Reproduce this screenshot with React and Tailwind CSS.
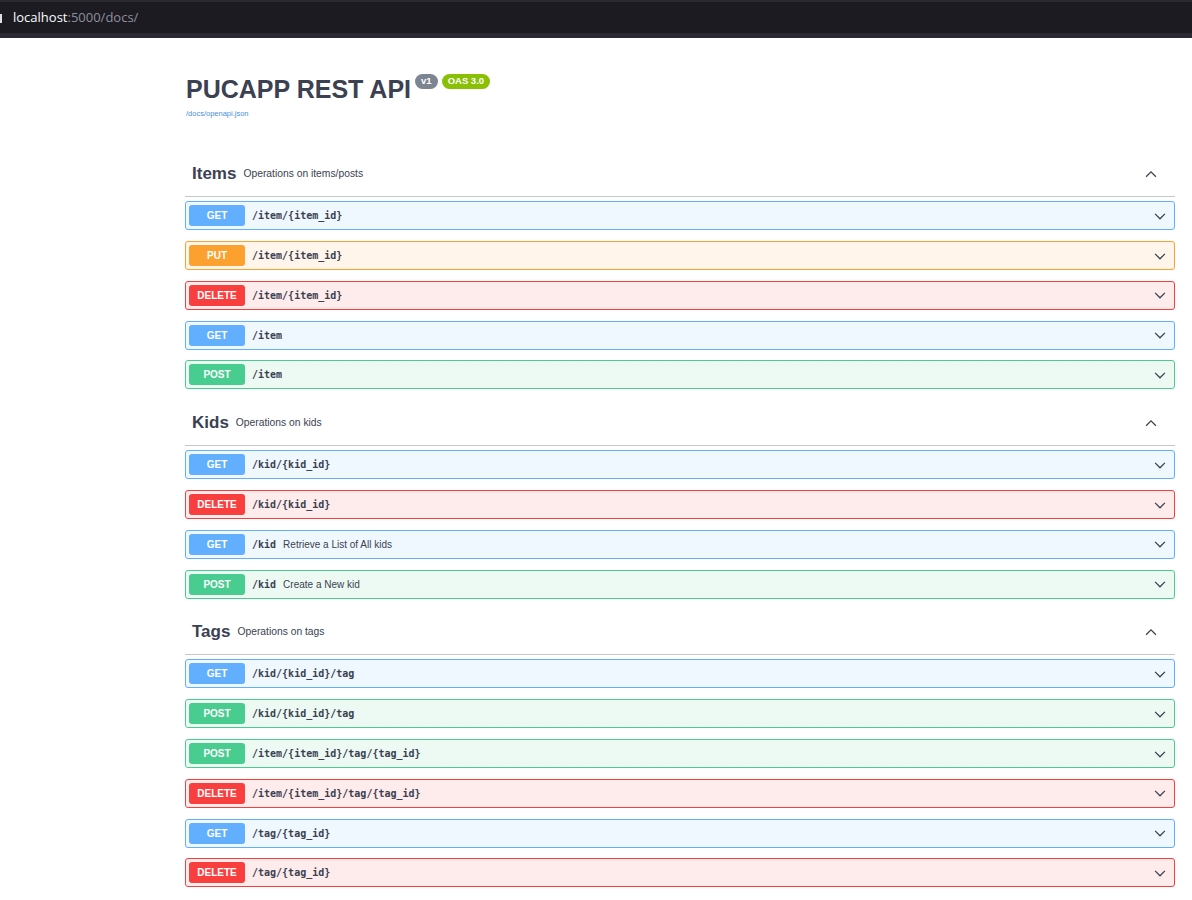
import React from 'react';

const methodStyles = {
  GET: { row: 'border-[#61affe] bg-[#eff7ff]', badge: 'bg-[#61affe]' },
  PUT: { row: 'border-[#fca130] bg-[#fff5ea]', badge: 'bg-[#fca130]' },
  DELETE: { row: 'border-[#f93e3e] bg-[#feebeb]', badge: 'bg-[#f93e3e]' },
  POST: { row: 'border-[#49cc90] bg-[#edfaf3]', badge: 'bg-[#49cc90]' },
};

const sections = [
  {
    name: 'Items',
    desc: 'Operations on items/posts',
    ops: [
      { method: 'GET', path: '/item/{item_id}' },
      { method: 'PUT', path: '/item/{item_id}' },
      { method: 'DELETE', path: '/item/{item_id}' },
      { method: 'GET', path: '/item' },
      { method: 'POST', path: '/item' },
    ],
  },
  {
    name: 'Kids',
    desc: 'Operations on kids',
    ops: [
      { method: 'GET', path: '/kid/{kid_id}' },
      { method: 'DELETE', path: '/kid/{kid_id}' },
      { method: 'GET', path: '/kid', summary: 'Retrieve a List of All kids' },
      { method: 'POST', path: '/kid', summary: 'Create a New kid' },
    ],
  },
  {
    name: 'Tags',
    desc: 'Operations on tags',
    ops: [
      { method: 'GET', path: '/kid/{kid_id}/tag' },
      { method: 'POST', path: '/kid/{kid_id}/tag' },
      { method: 'POST', path: '/item/{item_id}/tag/{tag_id}' },
      { method: 'DELETE', path: '/item/{item_id}/tag/{tag_id}' },
      { method: 'GET', path: '/tag/{tag_id}' },
      { method: 'DELETE', path: '/tag/{tag_id}' },
    ],
  },
];

const Chevron = ({ up }) => (
  <svg width="14" height="14" viewBox="0 0 20 20" className="text-[#3b4151]">
    <path
      d={up ? 'M3 14 L10 7 L17 14' : 'M3 7 L10 14 L17 7'}
      fill="none"
      stroke="currentColor"
      strokeWidth="1.8"
    />
  </svg>
);

const OpRow = ({ op }) => {
  const s = methodStyles[op.method];
  return (
    <div className={`flex items-center h-[29px] mb-[10.8px] border rounded-[3px] pl-[3px] pr-[7px] ${s.row}`}>
      <span className={`w-[56px] h-[21px] rounded-[3px] flex items-center justify-center text-white text-[10px] font-bold ${s.badge}`}>
        {op.method}
      </span>
      <span className="ml-[7px] font-['DejaVu_Sans_Mono',monospace] font-semibold text-[10px] text-[#3b4151]">
        {op.path}
      </span>
      {op.summary && <span className="ml-[7px] text-[10px] text-[#3b4151]">{op.summary}</span>}
      <span className="ml-auto">
        <Chevron />
      </span>
    </div>
  );
};

export default function App() {
  return (
    <div className="min-h-[900px] bg-white font-['Liberation_Sans',Arial,sans-serif]">
      <div className="h-[38px] bg-[#1c1b22] border-t-2 border-b-[5px] border-[#2b2a33] flex items-center relative">
        <span className="absolute left-0 top-[12px] w-[2px] h-[9px] bg-[#e0e0e6]" />
        <span className="ml-[13px] font-['Open_Sans',sans-serif] text-[13px] text-[#fbfbfe]">
          localhost<span className="text-[#8f8f9d]">:5000/docs/</span>
        </span>
      </div>

      <div className="ml-[185px] w-[990px] pb-[10px]">
        <div className="pt-[36px] pl-[1px]">
          <div className="flex items-start">
            <h1 className="text-[25px] leading-none font-bold text-[#3b4151] mt-[3px]">PUCAPP REST API</h1>
            <span className="ml-[4px] h-[15px] px-[6px] rounded-full bg-[#7d8492] text-white text-[9.5px] font-bold flex items-center">v1</span>
            <span className="ml-[4px] h-[15px] px-[6px] rounded-full bg-[#89bf04] text-white text-[9.5px] font-bold flex items-center">OAS 3.0</span>
          </div>
          <div className="text-[7.5px] text-[#4990e2] mt-[6px]">/docs/openapi.json</div>
        </div>

        <div className="mt-[32px]">
          {sections.map((sec) => (
            <div key={sec.name}>
              <div className="h-[46px] border-b border-[#c4c6cb] flex items-center pl-[7px] pr-[17px]">
                <span className="text-[17px] font-bold text-[#3b4151]">{sec.name}</span>
                <span className="ml-[7px] text-[10.3px] text-[#3b4151]">{sec.desc}</span>
                <span className="ml-auto">
                  <Chevron up />
                </span>
              </div>
              <div className="mt-[4px]">
                {sec.ops.map((op, i) => (
                  <OpRow key={i} op={op} />
                ))}
              </div>
            </div>
          ))}
        </div>
      </div>
    </div>
  );
}
